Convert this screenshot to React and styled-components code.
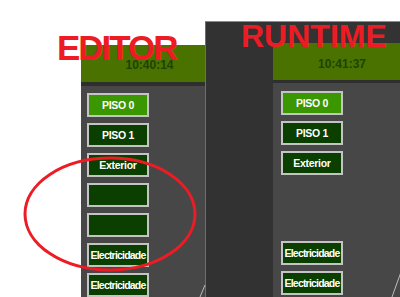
import styled, { createGlobalStyle } from 'styled-components';

const GlobalStyle = createGlobalStyle`
  body {
    margin: 0;
    background: #fff;
    font-family: "Liberation Sans", Arial, sans-serif;
  }
`;

const Stage = styled.div`
  position: relative;
  width: 400px;
  height: 297px;
  overflow: hidden;
  background: #fff;
`;

const EditorWindow = styled.div`
  position: absolute;
  left: 81px;
  top: 45px;
  width: 137px;
  bottom: 0;
  display: flex;
  flex-direction: column;
`;

const RuntimeWindow = styled.div`
  position: absolute;
  left: 205px;
  top: 21px;
  bottom: 0;
  width: 210px;
  display: flex;
  background: #333333;
  border-top: 1px solid #8c8c8c;
  border-left: 1px solid #6e6e6e;
`;

const Sidebar = styled.div`
  width: 67px;
  background: #323232;
`;

const Main = styled.div`
  width: 138px;
  display: flex;
  flex-direction: column;
  padding-top: 21px;
`;

const Header = styled.div`
  height: 37px;
  background: #4a7200;
  display: flex;
  align-items: center;
  justify-content: center;
  padding-top: ${({ $shift }) => $shift || 0}px;
  box-sizing: border-box;
  color: #1d4400;
  font-weight: bold;
  font-size: 12px;
`;

const Band = styled.div`
  height: ${({ $h }) => $h}px;
  background: #2f2f2f;
`;

const Body = styled.div`
  flex: 1;
  background: #474747;
  display: flex;
  flex-direction: column;
  gap: 6px;
  padding: ${({ $pad }) => $pad};
`;

const Button = styled.div`
  width: 62px;
  height: 24px;
  box-sizing: border-box;
  border: 2px solid #c4c4c4;
  background: ${({ $active }) => ($active ? '#3a9700' : '#0b3f00')};
  color: #fff;
  font-weight: bold;
  font-size: 10.5px;
  letter-spacing: ${({ $tight }) => ($tight ? '-0.8px' : '-0.3px')};
  display: flex;
  align-items: center;
  justify-content: center;
  white-space: nowrap;
  visibility: ${({ $hidden }) => ($hidden ? 'hidden' : 'visible')};
`;

const Label = styled.div`
  position: absolute;
  left: ${({ $x }) => $x}px;
  top: ${({ $y }) => $y}px;
  color: #ed1c24;
  font-weight: bold;
  font-size: ${({ $size }) => $size}px;
  letter-spacing: ${({ $spacing }) => $spacing}px;
  line-height: 1;
  z-index: 3;
`;

const Overlay = styled.svg`
  position: absolute;
  left: 0;
  top: 0;
  z-index: 4;
  pointer-events: none;
`;

const BUTTONS = [
  { label: 'PISO 0', active: true },
  { label: 'PISO 1' },
  { label: 'Exterior' },
  { label: '', blank: true },
  { label: '', blank: true },
  { label: 'Electricidade', tight: true },
  { label: 'Electricidade', tight: true },
];

const Buttons = ({ hideBlank }) =>
  BUTTONS.map((b, i) => (
    <Button key={i} $active={b.active} $tight={b.tight} $hidden={hideBlank && b.blank}>
      {b.label}
    </Button>
  ));

export default function App() {
  return (
    <>
      <GlobalStyle />
      <Stage>
        <EditorWindow>
          <Header $shift={2}>10:40:14</Header>
          <Band $h={4} />
          <Body $pad="7px 0 0 6px">
            <Buttons />
          </Body>
        </EditorWindow>

        <RuntimeWindow>
          <Sidebar />
          <Main>
            <Header $shift={4}>10:41:37</Header>
            <Band $h={3} />
            <Body $pad="8px 0 0 8px">
              <Buttons hideBlank />
            </Body>
          </Main>
        </RuntimeWindow>

        <Label $x={57} $y={30} $size={35} $spacing={-2}>EDITOR</Label>
        <Label $x={241} $y={20} $size={32} $spacing={0}>RUNTIME</Label>

        <Overlay width="400" height="297" viewBox="0 0 400 297">
          <ellipse cx="110" cy="214" rx="85" ry="56" fill="none" stroke="#ed1c24" strokeWidth="3" />
          <line x1="205" y1="285" x2="200" y2="297" stroke="#bdbdbd" strokeWidth="1" />
          <line x1="401" y1="272" x2="392" y2="297" stroke="#bdbdbd" strokeWidth="1" />
        </Overlay>
      </Stage>
    </>
  );
}
